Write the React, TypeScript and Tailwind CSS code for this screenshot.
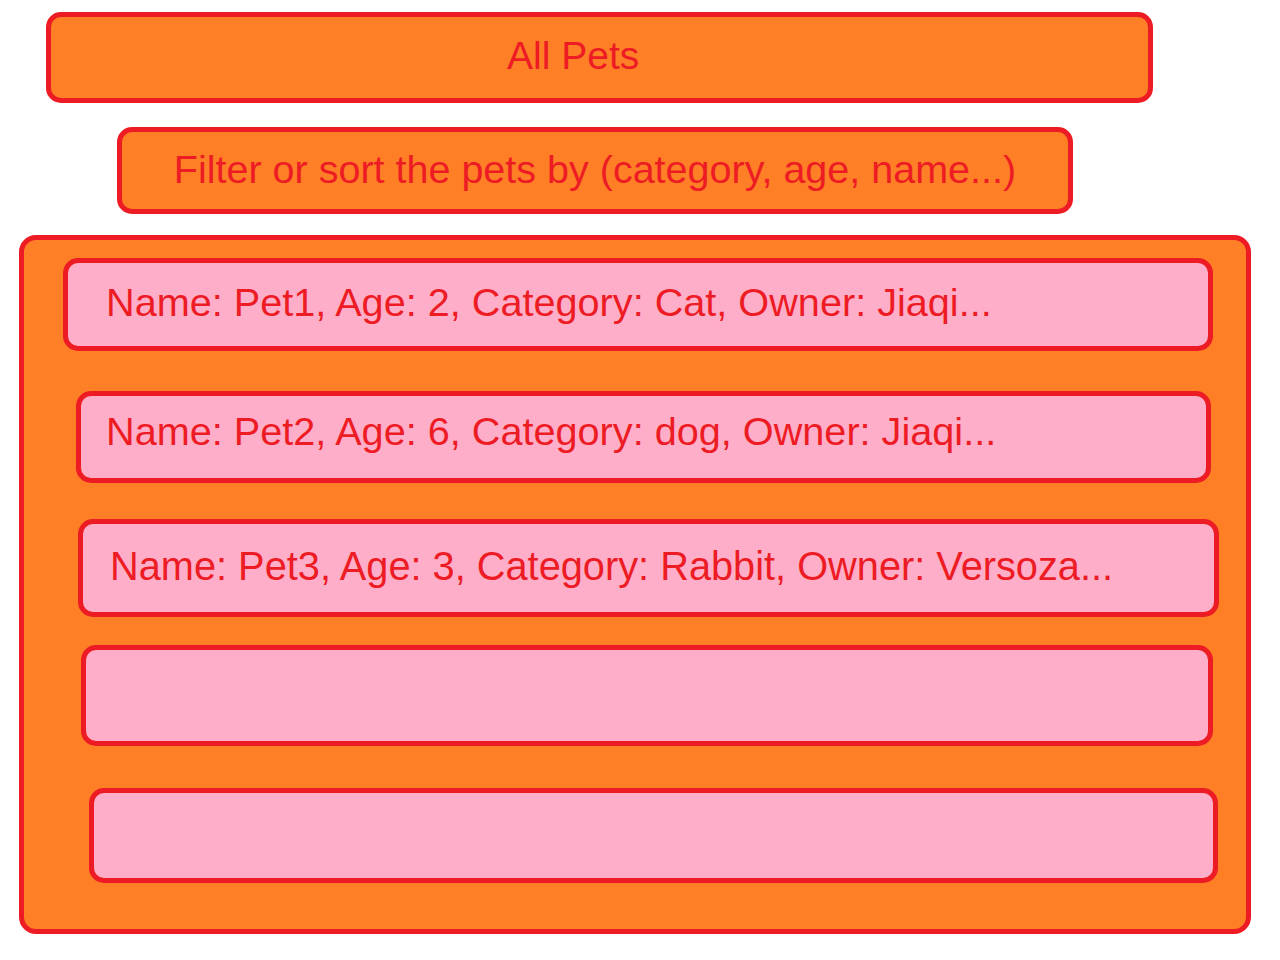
import React from "react";

const font = { fontFamily: '"Liberation Sans", Arial, sans-serif' };

export default function App() {
  return (
    <div className="w-[1280px] h-[960px] bg-white relative overflow-hidden" style={font}>
      <div className="pt-[12px] flex flex-col">
        <div className="ml-[46px] w-[1107px] h-[91px] rounded-[15px] border-[5px] border-[#ED1C24] bg-[#FF7F27] flex items-center pl-[456px] pb-[5px]">
          <span className="text-[39px] leading-none text-[#ED1C24]">All Pets</span>
        </div>
        <div className="mt-[24px] ml-[117px] w-[956px] h-[87px] rounded-[15px] border-[5px] border-[#ED1C24] bg-[#FF7F27] flex items-center justify-center pb-[2px]">
          <span className="text-[39.5px] leading-none text-[#ED1C24] whitespace-nowrap">Filter or sort the pets by (category, age, name...)</span>
        </div>
        <div className="mt-[21px] ml-[19px] w-[1232px] h-[699px] rounded-[17px] border-[5px] border-[#ED1C24] bg-[#FF7F27] flex flex-col pt-[18px]">
          <div className="ml-[39px] w-[1150px] h-[93px] rounded-[15px] border-[5px] border-[#ED1C24] bg-[#FFAEC9] flex items-center pl-[38px] pb-[4px]">
            <span className="text-[39.65px] leading-none text-[#ED1C24] whitespace-nowrap">Name: Pet1, Age: 2, Category: Cat, Owner: Jiaqi...</span>
          </div>
          <div className="mt-[40px] ml-[52px] w-[1135px] h-[92px] rounded-[15px] border-[5px] border-[#ED1C24] bg-[#FFAEC9] flex items-center pl-[25px] pb-[10px]">
            <span className="text-[39.65px] leading-none text-[#ED1C24] whitespace-nowrap">Name: Pet2, Age: 6, Category: dog, Owner: Jiaqi...</span>
          </div>
          <div className="mt-[36px] ml-[54px] w-[1141px] h-[98px] rounded-[15px] border-[5px] border-[#ED1C24] bg-[#FFAEC9] flex items-center pl-[27px] pb-[2px]">
            <span className="text-[39.75px] leading-none text-[#ED1C24] whitespace-nowrap">Name: Pet3, Age: 3, Category: Rabbit, Owner: Versoza...</span>
          </div>
          <div className="mt-[28px] ml-[57px] w-[1132px] h-[101px] rounded-[15px] border-[5px] border-[#ED1C24] bg-[#FFAEC9]" />
          <div className="mt-[42px] ml-[65px] w-[1129px] h-[95px] rounded-[15px] border-[5px] border-[#ED1C24] bg-[#FFAEC9]" />
        </div>
      </div>
    </div>
  );
}
